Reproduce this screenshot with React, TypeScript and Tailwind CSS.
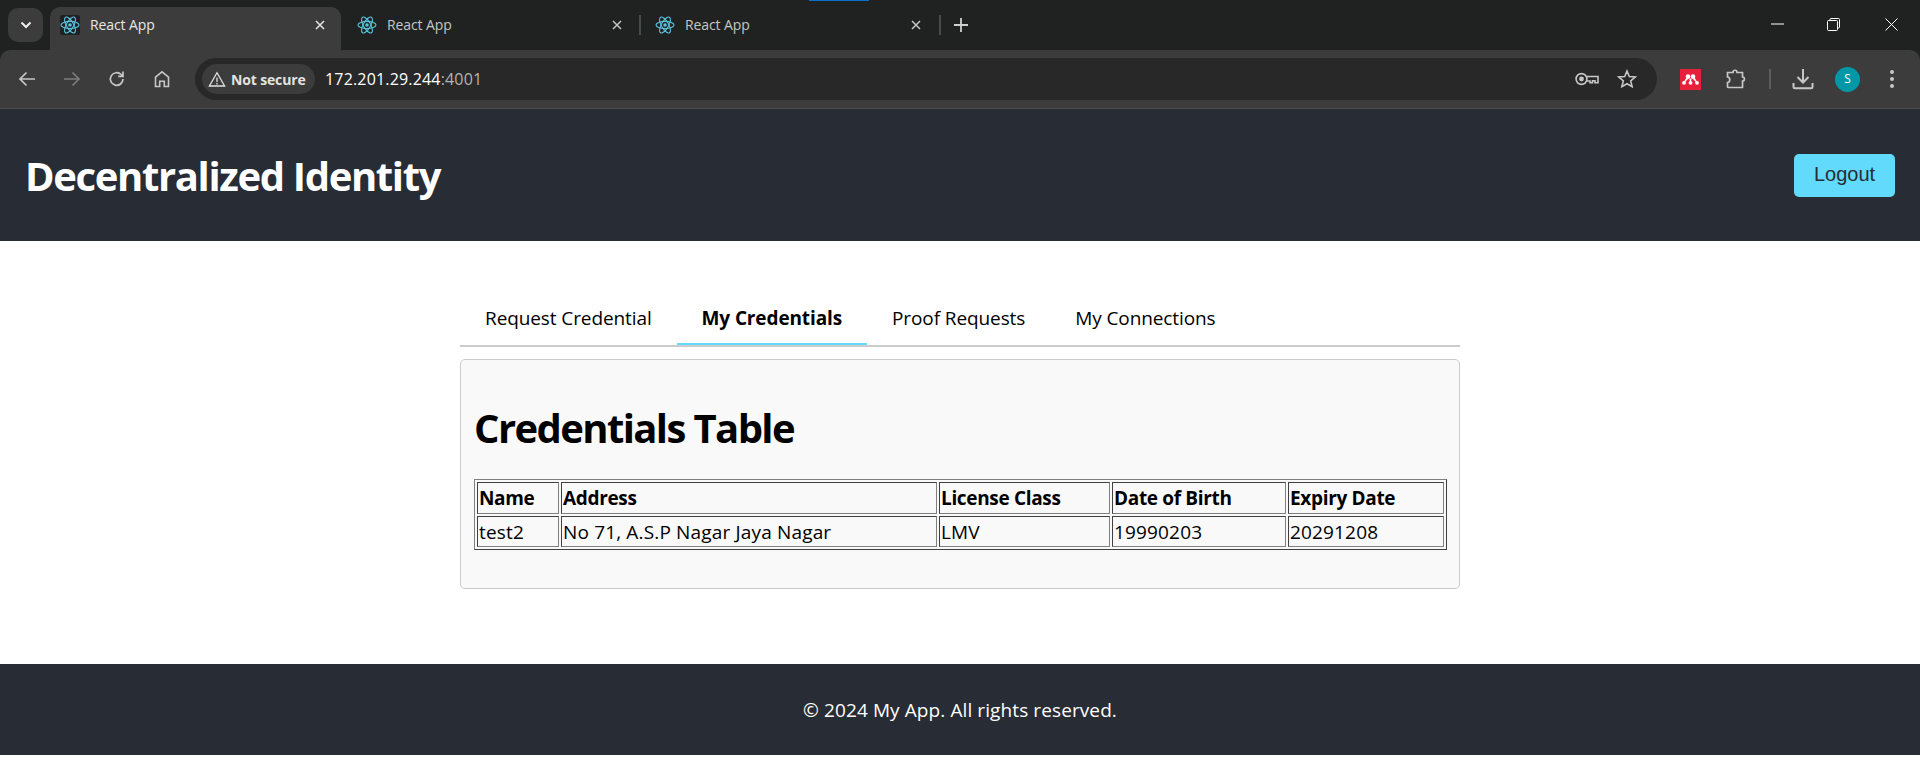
import React from "react";

const sans = "font-['Open_Sans',sans-serif]";

function ReactIcon() {
  return (
    <svg width="20" height="20" viewBox="0 0 20 20" fill="none" stroke="#58c4dc" strokeWidth="1.1">
      <ellipse cx="10" cy="10" rx="9" ry="3.6" />
      <ellipse cx="10" cy="10" rx="9" ry="3.6" transform="rotate(60 10 10)" />
      <ellipse cx="10" cy="10" rx="9" ry="3.6" transform="rotate(120 10 10)" />
      <circle cx="10" cy="10" r="1.8" fill="#58c4dc" stroke="none" />
    </svg>
  );
}

function CloseX({ c = "#d0d0d0" }: { c?: string }) {
  return (
    <svg width="10" height="10" viewBox="0 0 10 10" stroke={c} strokeWidth="1.5">
      <path d="M1 1l8 8M9 1l-8 8" />
    </svg>
  );
}

function Tab({ active, width, close, pad }: { active?: boolean; width: string; close: string; pad: string }) {
  return (
    <div className={`flex items-center h-[43px] pb-[7px] ${width} ${pad} ${active ? "bg-[#3c3c3c] rounded-t-[10px] text-[#e8e8e8]" : "text-[#c4c7c5]"}`}>
      <div className={active ? "w-5 h-5 bg-[#202124] rounded-[2px] flex items-center justify-center" : "w-5 h-5 flex items-center justify-center"}>
        <ReactIcon />
      </div>
      <span className="ml-[10px] text-[14px] tracking-[-0.1px] leading-[20px] font-['Open_Sans',sans-serif]">React App</span>
      <div className={`flex-1 flex justify-end ${close}`}>
        <CloseX c={active ? "#e8e8e8" : "#c4c7c5"} />
      </div>
    </div>
  );
}

const iconStroke = "#c7c7c7";

function Toolbar() {
  return (
    <div className="h-[59px] bg-[#3c3c3c] border-b border-[#4a4d50] rounded-t-[10px] flex items-center">
      <div className="flex items-center w-[195px] shrink-0 pl-[17px] gap-[25px]">
        <svg width="20" height="20" viewBox="0 0 20 20" fill="none" stroke={iconStroke} strokeWidth="1.7"><path d="M18 10H3M9.500 3.500L3 10l6.500 6.500" /></svg>
        <svg width="20" height="20" viewBox="0 0 20 20" fill="none" stroke="#7c7c7c" strokeWidth="1.7"><path d="M2 10h15M10.500 3.500L17 10l-6.500 6.500" /></svg>
        <svg width="20" height="20" viewBox="0 0 20 20" fill="none" stroke={iconStroke} strokeWidth="1.7"><path d="M16 10a6.300 6.300 0 1 1-1.900-4.500L16 7.400M16 2.600v4.800h-4.800" /></svg>
        <svg width="20" height="20" viewBox="0 0 20 20" fill="none" stroke={iconStroke} strokeWidth="1.6"><path d="M3.500 17.500V8.200L10 2.800l6.500 5.400v9.300h-4.200v-5.200H7.700v5.200z" /></svg>
      </div>
      <div className="w-[1462px] h-[42px] rounded-full bg-[#282828] flex items-center pl-[7px] pr-[20px]">
        <div className="h-[30px] w-[113px] shrink-0 rounded-full bg-[#3c3c3c] flex items-center pl-[6px] gap-[5px]">
          <svg width="18" height="17" viewBox="0 0 18 17" fill="none" stroke="#e3e3e3" strokeWidth="1.300"><path d="M9 1.800L1.400 15h15.200zM9 6.500v4.600M9 12v1.400" /></svg>
          <span className="text-[14px] tracking-[-0.15px] font-bold text-[#e3e3e3] font-['Open_Sans',sans-serif]">Not secure</span>
        </div>
        <span className="ml-[10px] text-[16px] tracking-[0.17px] text-white font-['Open_Sans',sans-serif]">172.201.29.244<span className="text-[#b4b4b4]">:4001</span></span>
        <div className="flex-1" />
        <svg width="24" height="14" viewBox="0 0 24 14" fill="none" stroke={iconStroke} strokeWidth="1.600">
          <circle cx="6.500" cy="7" r="5.400" />
          <circle cx="6.500" cy="7" r="1.600" fill={iconStroke} />
          <path d="M12 4.500h11v6.200h-3v-2h-2.500v2H15V9h-3" />
        </svg>
        <svg className="ml-[18px]" width="20" height="20" viewBox="0 0 20 20" fill="none" stroke={iconStroke} strokeWidth="1.600"><path d="M10 2l2.300 5.500 6 .5-4.600 3.900 1.400 5.800L10 14.700l-5.100 3 1.400-5.800L1.700 8l6-.5z" /></svg>
      </div>
      <div className="flex items-center ml-[23px]">
        <div className="w-[21px] h-[21px] bg-[#e6203a] flex items-center justify-center">
          <svg width="17" height="11" viewBox="0 0 17 11" fill="white">
            <circle cx="6" cy="2.600" r="2.300" /><circle cx="11" cy="2.600" r="2.300" />
            <circle cx="2" cy="8.800" r="1.900" /><circle cx="8.500" cy="8.800" r="1.900" /><circle cx="15" cy="8.800" r="1.900" />
            <path d="M4.500 3.500L1.800 8h1.400L6 5zM12.500 3.500L15.200 8h-1.400L11 5zM7.300 4.500L8 8h1l.7-3.500z" />
          </svg>
        </div>
        <svg className="ml-[25px]" width="20" height="22" viewBox="0 0 20 22" fill="none" stroke={iconStroke} strokeWidth="1.700">
          <path d="M1.500 4.500h5.500c0-3 4-3 4 0h5.500v4.500c2.500 0 2.500 4 0 4v6.500H2.500c-.6 0-1-.4-1-1v-4c3 0 3-5.500 0-5.500z" />
        </svg>
        <div className="ml-[23px] w-[2px] h-[20px] bg-[#5c5c5c]" />
        <svg className="ml-[21px]" width="22" height="22" viewBox="0 0 22 22" fill="none" stroke={iconStroke} strokeWidth="2">
          <path d="M11 1v13M5.500 9l5.500 5.500L16.500 9M1.500 15v4c0 .8.500 1.300 1.300 1.300h16.400c.8 0 1.300-.5 1.300-1.300v-4" />
        </svg>
        <div className="ml-[21px] w-[25px] h-[25px] rounded-full bg-[#0097a7] flex items-center justify-center text-[12px] text-white font-['Open_Sans',sans-serif]">S</div>
        <div className="ml-[30px] flex flex-col gap-[3px]">
          <div className="w-[4px] h-[4px] rounded-full bg-[#c7c7c7]" />
          <div className="w-[4px] h-[4px] rounded-full bg-[#c7c7c7]" />
          <div className="w-[4px] h-[4px] rounded-full bg-[#c7c7c7]" />
        </div>
      </div>
    </div>
  );
}

function BrowserChrome() {
  return (
    <div className="bg-[#202221]">
      <div className="h-[50px] flex relative">
        <div className="absolute left-[809px] top-0 w-[60px] h-[1px] bg-[#0a6fd0]" />
        <div className="w-[50px] shrink-0 pl-2 pt-2">
          <div className="w-[35px] h-[34px] rounded-[10px] bg-[#3c3c3c] flex items-center justify-center">
            <svg width="12" height="8" viewBox="0 0 12 8" fill="none" stroke="#f0f0f0" strokeWidth="2"><path d="M1.500 1.500L6 6l4.500-4.500" /></svg>
          </div>
        </div>
        <div className="flex items-end">
          <Tab active width="w-[291px]" pad="pl-[10px]" close="pr-[16px]" />
          <Tab width="w-[299px]" pad="pl-[16px]" close="pr-[18px]" />
          <div className="w-[2px] h-[20px] bg-[#4a4a4a] mb-[15px] -ml-[1px]" />
          <Tab width="w-[298px]" pad="pl-[14px]" close="pr-[18px]" />
          <div className="w-[2px] h-[20px] bg-[#4a4a4a] mb-[15px]" />
          <div className="h-[43px] w-[40px] pb-[7px] flex items-center justify-center">
            <svg width="14" height="14" viewBox="0 0 14 14" stroke="#d0d0d0" strokeWidth="1.800"><path d="M7 0v14M0 7h14" /></svg>
          </div>
        </div>
        <div className="flex-1" />
        <div className="flex items-start pt-[18px] pr-[22px]">
          <svg width="13" height="13" viewBox="0 0 13 13" stroke="white" strokeWidth="1"><path d="M0 6h13" /></svg>
          <svg className="ml-[43px]" width="13" height="13" viewBox="0 0 13 13" fill="none" stroke="white" strokeWidth="1"><rect x=".5" y="2.500" width="10" height="10" rx="1" /><path d="M3 2.500V1.500c0-.6.400-1 1-1h7.500c.6 0 1 .4 1 1V9c0 .6-.4 1-1 1h-1" /></svg>
          <svg className="ml-[45px]" width="13" height="13" viewBox="0 0 13 13" stroke="white" strokeWidth="1"><path d="M.5.500l12 12M12.500.500l-12 12" /></svg>
        </div>
      </div>
      <Toolbar />
    </div>
  );
}

const cell = "border border-t-[#404040] border-l-[#404040] border-r-[#808080] border-b-[#808080] pl-[1px] pr-0 text-left align-middle";

export default function App() {
  const tabs = ["Request Credential", "My Credentials", "Proof Requests", "My Connections"];
  const heads = ["Name", "Address", "License Class", "Date of Birth", "Expiry Date"];
  const row = ["test2", "No 71, A.S.P Nagar Jaya Nagar", "LMV", "19990203", "20291208"];
  const widths = ["w-[82px]", "w-[376px]", "w-[171px]", "w-[174px]", "w-[156px]"];
  return (
    <div className={`min-h-[777px] bg-white text-black flex flex-col ${sans}`}>
      <BrowserChrome />
      <header className="h-[132px] bg-[#282c34] flex items-center justify-between pl-[25px] pr-[25px]">
        <h1 className="text-[40px] font-bold text-white tracking-[-1.35px] leading-[54px] mt-[2px]">Decentralized Identity</h1>
        <button className="w-[101px] h-[43px] pb-[2px] bg-[#61dafb] rounded-[5px] text-[20px] leading-none text-[#282c34] font-['Liberation_Sans',sans-serif]">Logout</button>
      </header>
      <main className="h-[423px] pt-[53px] flex justify-center">
        <div className="w-[1000px]">
          <div className="h-[53px] flex border-b-2 border-[#cccccc]">
            {tabs.map((t, i) => (
              <div
                key={t}
                className={`h-[51px] px-[25px] flex items-center text-[19px] border-b-2 ${i === 1 ? "font-bold border-[#61dafb] tracking-[-0.12px]" : "border-transparent tracking-[-0.1px]"}`}
              >
                {t}
              </div>
            ))}
          </div>
          <div className="mt-[12px] h-[230px] border border-[#cccccc] rounded-[5px] bg-[#f9f9f9] px-[13px]">
            <h2 className="mt-[41px] text-[40px] font-bold tracking-[-1.6px] leading-[54px]">Credentials Table</h2>
            <table className="mt-[24px] w-[973px] table-fixed border border-t-[#808080] border-l-[#808080] border-r-[#404040] border-b-[#404040] border-separate border-spacing-[2px] text-[19px] leading-[27px]">
              <thead>
                <tr>
                  {heads.map((h, i) => (
                    <th key={h} className={`${cell} ${widths[i]} pt-[2px] pb-[1px] font-bold tracking-[-0.33px]`}>{h}</th>
                  ))}
                </tr>
              </thead>
              <tbody>
                <tr>
                  {row.map((c) => (
                    <td key={c} className={`${cell} pt-[2px] pb-0 tracking-[0.16px]`}>{c}</td>
                  ))}
                </tr>
              </tbody>
            </table>
          </div>
        </div>
      </main>
      <footer className="h-[91px] pt-[2px] bg-[#282c34] flex items-center justify-center text-white text-[19px] tracking-[0.1px]">
        © 2024 My App. All rights reserved.
      </footer>
    </div>
  );
}
